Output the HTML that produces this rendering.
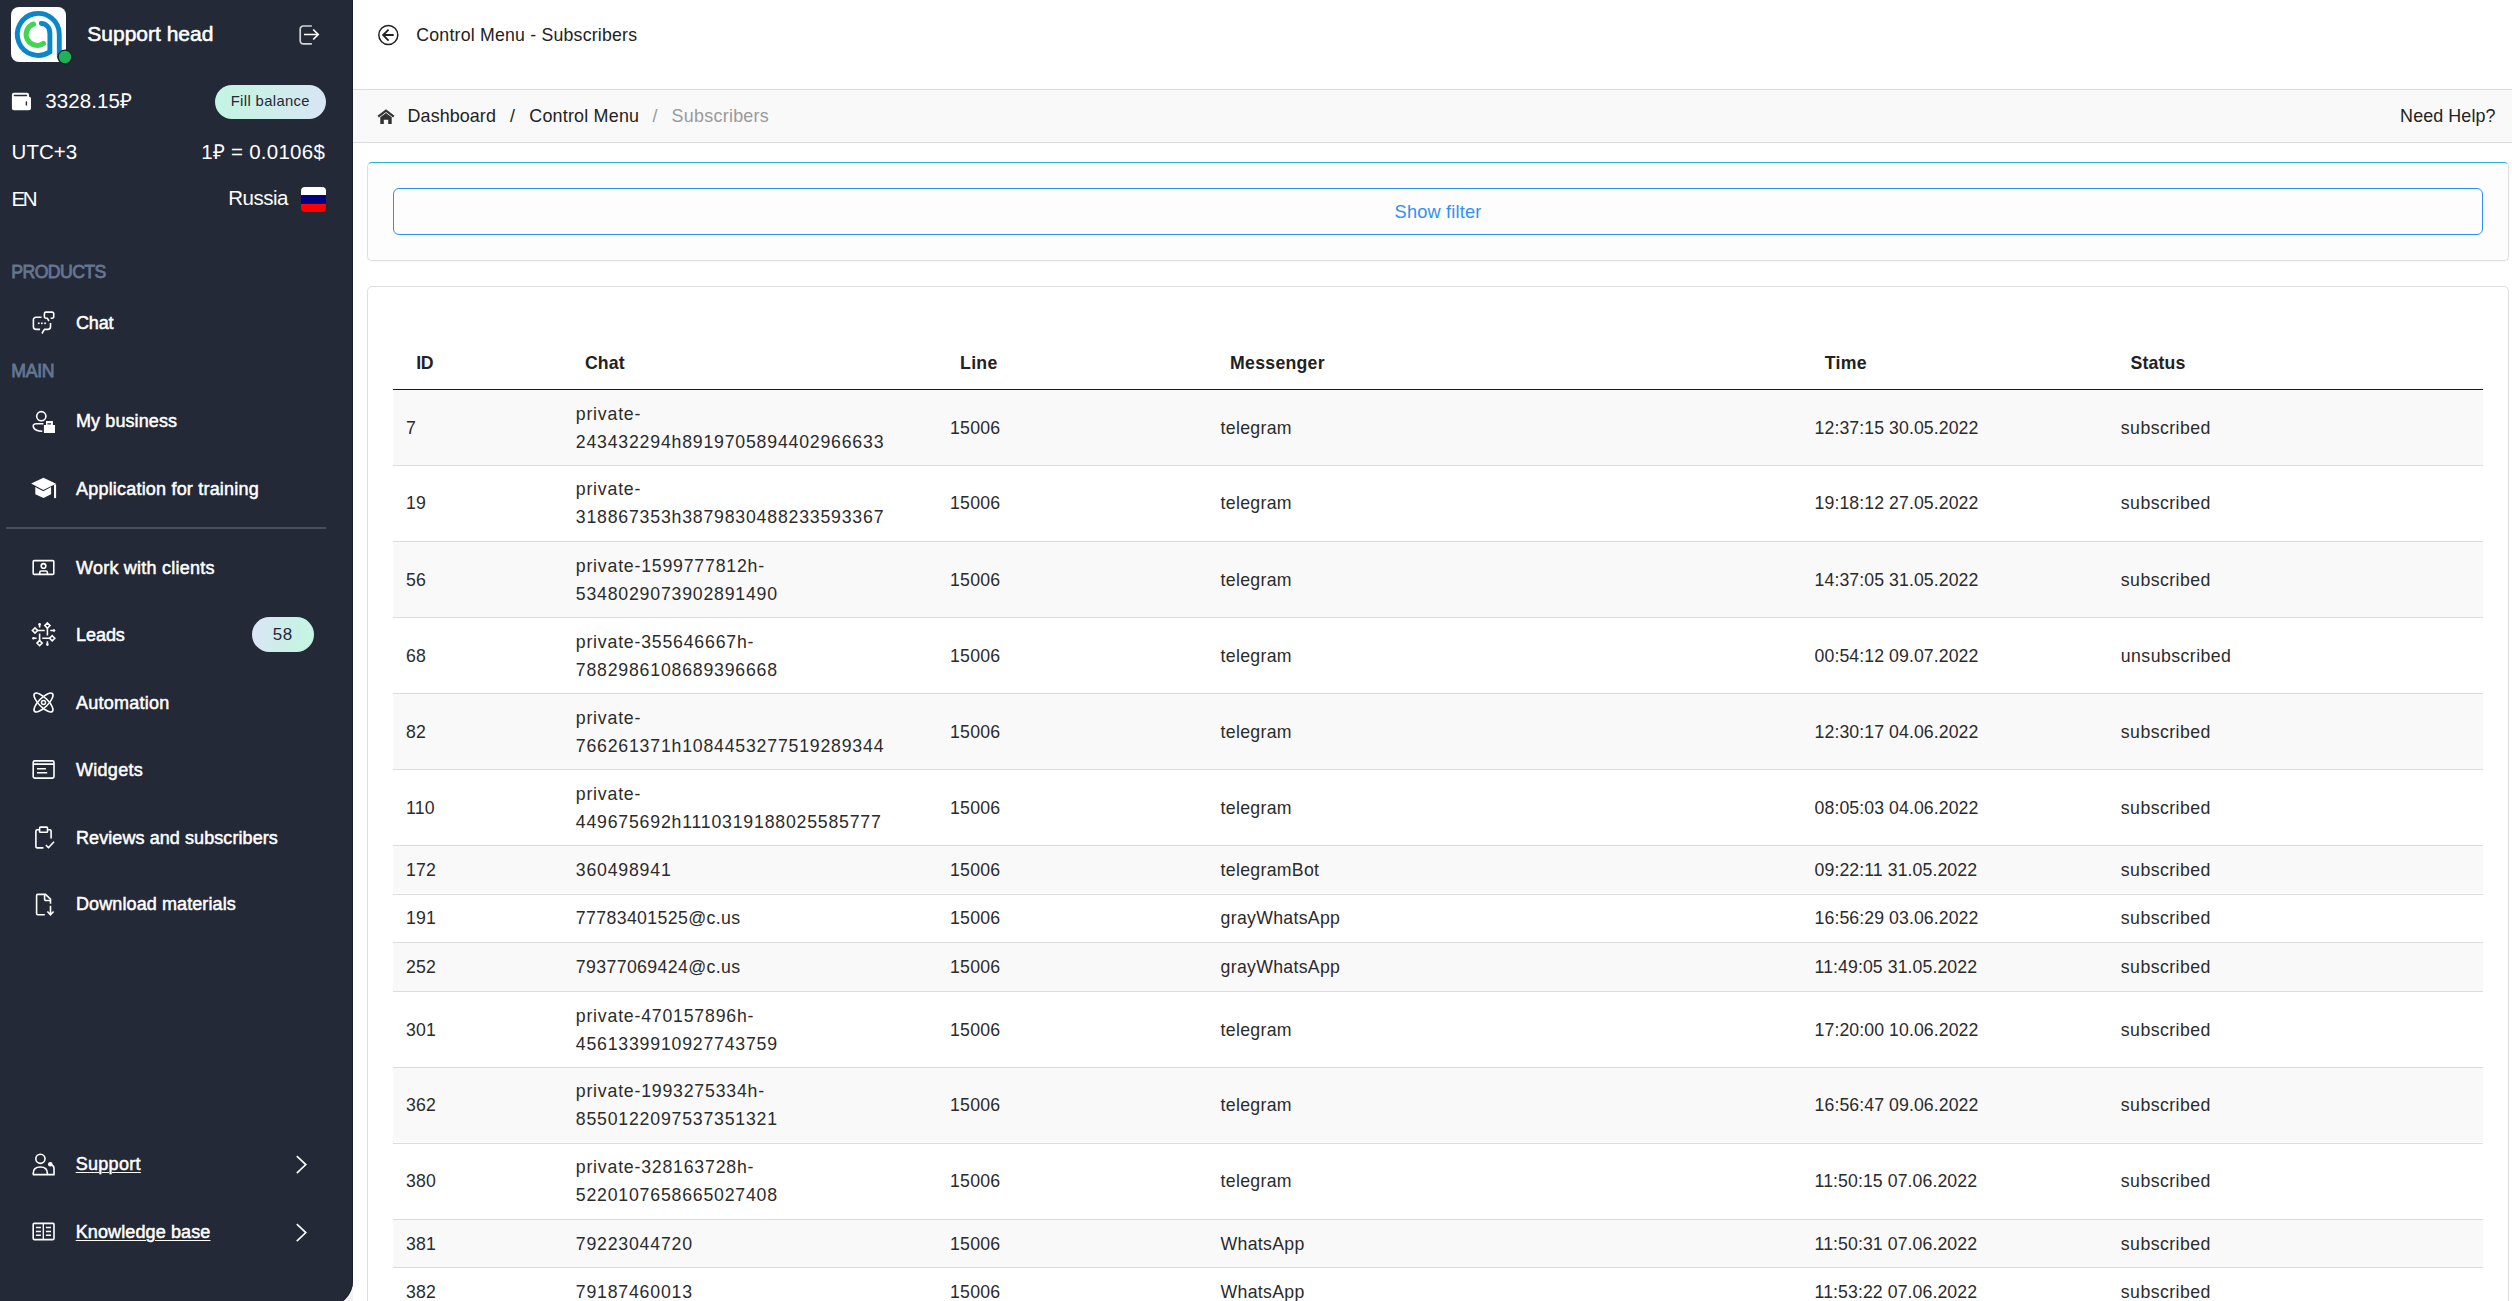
<!DOCTYPE html>
<html><head><meta charset="utf-8"><title>Control Menu - Subscribers</title>
<style>
html,body{margin:0;padding:0}
body{width:2512px;height:1301px;overflow:hidden;position:relative;background:#f2f2f2;font-family:"Liberation Sans",sans-serif}
.t{position:absolute;white-space:nowrap}
#sb{position:absolute;left:0;top:0;width:353px;height:1306px;background:#232936;border-bottom-right-radius:25px;box-shadow:inset -1px 0 0 #1b202b}
</style></head><body>
<div id="sb"></div>
<svg style="position:absolute;left:11px;top:7px" width="62" height="62" viewBox="0 0 62 62">
<rect x="0" y="0" width="55" height="55" rx="8" fill="#fff"/>
<path d="M30.3 16.5 C35.3 16.8 38.9 20.8 38.9 26.5 V44.9 A21 21 0 1 1 48.3 27.5 V50" fill="none" stroke="#0a87cc" stroke-width="4.9" stroke-linecap="round"/>
<path d="M22.6 17 A11 11 0 1 0 32.55 36.36" fill="none" stroke="#42d554" stroke-width="5.1" stroke-linecap="round"/>
<circle cx="54" cy="50" r="7.6" fill="#1c2130"/>
<circle cx="54" cy="50" r="6.2" fill="#1fb357"/>
</svg>
<div class="t" style="left:87.30px;top:23.42px;font-size:21px;line-height:21px;color:#fff;font-weight:400;letter-spacing:0px;-webkit-text-stroke:0.55px #fff;">Support head</div>
<svg style="position:absolute;left:296px;top:22px" width="26" height="26" viewBox="0 0 26 26">
<path d="M15.9 4 H7.5 A3 3 0 0 0 4.2 7 V18.8 A3 3 0 0 0 7.5 21.8 H15.9" fill="none" stroke="#d2d3d6" stroke-width="1.7"/>
<path d="M8 12.5 H22 M17.2 7.5 L22.2 12.5 L17.2 17.5" fill="none" stroke="#fff" stroke-width="1.7"/>
</svg>
<svg style="position:absolute;left:8px;top:88px" width="28" height="28" viewBox="0 0 28 28">
<path d="M5.9 4.7 H19 A2 2 0 0 1 21 6.7 V8.7 H21.1 A1.9 1.9 0 0 1 23 10.6 V20.2 A2 2 0 0 1 21 22.2 H5.9 A2 2 0 0 1 3.9 20.2 V6.7 A2 2 0 0 1 5.9 4.7 Z" fill="#fff"/>
<path d="M6.4 7.5 H18.5" stroke="#232936" stroke-width="1.3" stroke-linecap="round"/>
<path d="M18.4 13.9 V16.9" stroke="#232936" stroke-width="1.4" stroke-linecap="round"/>
</svg>
<div class="t" style="left:45.20px;top:91.15px;font-size:20.5px;line-height:20.5px;color:#fff;font-weight:400;letter-spacing:0.1px;">3328.15₽</div>
<div style="position:absolute;left:215px;top:85px;width:111px;height:34px;border-radius:17px;background:linear-gradient(100deg,#c3f5e2 0%,#cdeee9 50%,#d9e5f7 100%)"></div>
<div class="t" style="left:230.70px;top:94.17px;font-size:14.8px;line-height:14.8px;color:#232936;font-weight:400;letter-spacing:0.37px;">Fill balance</div>
<div class="t" style="left:11.60px;top:141.75px;font-size:20.5px;line-height:20.5px;color:#fff;font-weight:400;letter-spacing:0px;">UTC+3</div>
<div class="t" style="right:2186.95px;top:141.75px;font-size:20.5px;line-height:20.5px;color:#fff;font-weight:400;letter-spacing:0.25px;">1₽ = 0.0106$</div>
<div class="t" style="left:11.60px;top:188.65px;font-size:20.5px;line-height:20.5px;color:#fff;font-weight:400;letter-spacing:-2.4px;">EN</div>
<div class="t" style="right:2223.99px;top:188.35px;font-size:20.5px;line-height:20.5px;color:#fff;font-weight:400;letter-spacing:-0.49px;">Russia</div>
<div style="position:absolute;left:301px;top:187px;width:25px;height:25px;border-radius:4px;overflow:hidden">
<div style="height:8.3px;background:#fff"></div><div style="height:8.4px;background:#000080"></div><div style="height:8.3px;background:#ff0000"></div></div>
<div class="t" style="left:11.30px;top:264.02px;font-size:17.7px;line-height:17.7px;color:#64768f;font-weight:400;letter-spacing:-0.6px;-webkit-text-stroke:0.8px #64768f;">PRODUCTS</div>
<div class="t" style="left:11.30px;top:363.12px;font-size:17.7px;line-height:17.7px;color:#64768f;font-weight:400;letter-spacing:-0.3px;-webkit-text-stroke:0.8px #64768f;">MAIN</div>
<div class="t" style="left:76.00px;top:313.86px;font-size:18px;line-height:18px;color:#fff;font-weight:400;letter-spacing:-0.15px;-webkit-text-stroke:0.5px #fff;">Chat</div>
<div class="t" style="left:76.00px;top:411.96px;font-size:18px;line-height:18px;color:#fff;font-weight:400;letter-spacing:0.1px;-webkit-text-stroke:0.5px #fff;">My business</div>
<div class="t" style="left:76.00px;top:479.86px;font-size:18px;line-height:18px;color:#fff;font-weight:400;letter-spacing:0.2px;-webkit-text-stroke:0.5px #fff;">Application for training</div>
<div class="t" style="left:76.00px;top:558.96px;font-size:18px;line-height:18px;color:#fff;font-weight:400;letter-spacing:0.24px;-webkit-text-stroke:0.5px #fff;">Work with clients</div>
<div class="t" style="left:76.00px;top:625.86px;font-size:18px;line-height:18px;color:#fff;font-weight:400;letter-spacing:-0.05px;-webkit-text-stroke:0.5px #fff;">Leads</div>
<div class="t" style="left:76.00px;top:693.66px;font-size:18px;line-height:18px;color:#fff;font-weight:400;letter-spacing:0.25px;-webkit-text-stroke:0.5px #fff;">Automation</div>
<div class="t" style="left:76.00px;top:760.56px;font-size:18px;line-height:18px;color:#fff;font-weight:400;letter-spacing:0.28px;-webkit-text-stroke:0.5px #fff;">Widgets</div>
<div class="t" style="left:76.00px;top:828.76px;font-size:18px;line-height:18px;color:#fff;font-weight:400;letter-spacing:0.08px;-webkit-text-stroke:0.5px #fff;">Reviews and subscribers</div>
<div class="t" style="left:76.00px;top:895.36px;font-size:18px;line-height:18px;color:#fff;font-weight:400;letter-spacing:0.1px;-webkit-text-stroke:0.5px #fff;">Download materials</div>
<div style="position:absolute;left:6px;top:527px;width:320px;height:2px;background:#4a4f5b"></div>
<div style="position:absolute;left:252px;top:617px;width:62px;height:35px;border-radius:17.5px;background:linear-gradient(100deg,#dbe5f8 0%,#cdeee9 50%,#c3f7e2 100%)"></div>
<div class="t" style="left:272.80px;top:626.31px;font-size:17px;line-height:17px;color:#232936;font-weight:400;letter-spacing:0.55px;">58</div>
<div class="t" style="left:75.70px;top:1154.86px;font-size:18px;line-height:18px;color:#fff;font-weight:400;letter-spacing:0.3px;-webkit-text-stroke:0.5px #fff;text-decoration:underline;text-underline-offset:2px;text-decoration-thickness:1px;">Support</div>
<div class="t" style="left:75.70px;top:1222.96px;font-size:18px;line-height:18px;color:#fff;font-weight:400;letter-spacing:0.12px;-webkit-text-stroke:0.5px #fff;text-decoration:underline;text-underline-offset:2px;text-decoration-thickness:1px;">Knowledge base</div>
<svg style="position:absolute;left:294px;top:1155px" width="15" height="20" viewBox="0 0 15 20">
<path d="M2.8 1.2 L11.8 9.6 L2.8 18.2" fill="none" stroke="#fff" stroke-width="1.6"/></svg>
<svg style="position:absolute;left:294px;top:1222.5px" width="15" height="20" viewBox="0 0 15 20">
<path d="M2.8 1.2 L11.8 9.6 L2.8 18.2" fill="none" stroke="#fff" stroke-width="1.6"/></svg>
<svg style="position:absolute;left:28px;top:305px" width="32" height="35" viewBox="0 0 32 35" fill="none" stroke="#fff" stroke-width="1.6">
<path d="M13.5 12.2 H8 A2.6 2.6 0 0 0 5.4 14.8 V21.8 A2.6 2.6 0 0 0 8 24.4 H12.1"/>
<path d="M16.1 24.4 H19.9 A2.6 2.6 0 0 0 22.5 21.8 V18.1"/>
<path d="M16.3 24.3 L14 28.5"/>
<path d="M22.6 13.2 H24.2 A1.5 1.5 0 0 0 25.7 11.7 V8.6 A1.5 1.5 0 0 0 24.2 7.1 H17.9 A1.5 1.5 0 0 0 16.4 8.6 V11.7 A1.5 1.5 0 0 0 17.9 13.2 H19.3 L20.9 16"/>
<g fill="#fff" stroke="none"><rect x="9.9" y="17.5" width="1.7" height="1.6"/><rect x="13" y="17.5" width="1.7" height="1.6"/><rect x="16.2" y="17.5" width="1.7" height="1.6"/></g>
</svg>
<svg style="position:absolute;left:28px;top:405px" width="32" height="35" viewBox="0 0 32 35" fill="none" stroke="#fff" stroke-width="1.6">
<circle cx="13.3" cy="11.2" r="4.6"/>
<path d="M15.4 18.8 H8 C5.5 18.8 4.6 20.6 5.6 22.6 C6.6 24.8 9.5 26.2 14.3 26.2"/>
<g fill="#fff" stroke="none">
<path d="M18 16.1 H24.9 V20 H27 V27.9 H15.9 V20 H18 Z M19.4 18.2 V19.5 H23 V18.2 Z" fill-rule="evenodd"/>
</g>
</svg>
<svg style="position:absolute;left:28px;top:470px" width="32" height="35" viewBox="0 0 32 35" fill="none" stroke="#fff" stroke-width="1.6">
<g fill="#fff" stroke="none">
<path d="M3.2 13.5 L15.5 7.7 L28 13.7 L15.3 20.1 Z"/>
<path d="M7.3 17 L15.3 21.2 L23.1 17 V24.2 L15.5 28 L7.3 24.2 Z"/>
<rect x="26" y="14.4" width="2.1" height="13.7"/>
</g>
</svg>
<svg style="position:absolute;left:28px;top:550px" width="32" height="35" viewBox="0 0 32 35" fill="none" stroke="#fff" stroke-width="1.6">
<rect x="5.2" y="10.6" width="20.6" height="13.8" rx="1"/>
<circle cx="15.5" cy="15.9" r="2.3"/>
<path d="M11.7 24.4 V22.6 A1.6 1.6 0 0 1 13.3 21 H17.8 A1.6 1.6 0 0 1 19.4 22.6 V24.4"/>
</svg>
<svg style="position:absolute;left:28px;top:617px" width="32" height="35" viewBox="0 0 32 35" fill="none" stroke="#fff" stroke-width="1.6">
<path d="M9.4 13.5 H16.7 M19.4 11 V18.6 M14.3 21.3 H21.8 M11.6 16.4 V23.7 M11.6 7.4 V10.5 M22.3 13.5 H25.8 M5.9 21.3 H8.6 M19.4 24.2 V27.4"/>
<path d="M7 10.9 L9.6 13.5 L7 16.1 L4.4 13.5 Z M19.4 6 L22 8.6 L19.4 11.2 L16.8 8.6 Z M24.2 18.7 L26.8 21.3 L24.2 23.9 L21.6 21.3 Z M11.6 23.5 L14.2 26.1 L11.6 28.7 L9 26.1 Z"/>
<g fill="#fff" stroke="none"><circle cx="11.6" cy="7.2" r="1.3"/><circle cx="26" cy="13.5" r="1.3"/><circle cx="5.5" cy="21.3" r="1.3"/><circle cx="19.4" cy="27.6" r="1.3"/></g>
</svg>
<svg style="position:absolute;left:28px;top:685px" width="32" height="35" viewBox="0 0 32 35" fill="none" stroke="#fff" stroke-width="1.6">
<ellipse cx="15.5" cy="17.5" rx="12.6" ry="4.6" transform="rotate(45 15.5 17.5)"/>
<ellipse cx="15.5" cy="17.5" rx="12.6" ry="4.6" transform="rotate(-45 15.5 17.5)"/>
<circle cx="15.5" cy="17.5" r="2" stroke-width="1.5"/>
</svg>
<svg style="position:absolute;left:28px;top:752px" width="32" height="35" viewBox="0 0 32 35" fill="none" stroke="#fff" stroke-width="1.6">
<rect x="5.2" y="8.9" width="20.8" height="17.2" rx="1.5"/>
<path d="M5.2 12.1 H26 M9 16.7 H17.9 M9 20.7 H19.2"/>
</svg>
<svg style="position:absolute;left:28px;top:820px" width="32" height="35" viewBox="0 0 32 35" fill="none" stroke="#fff" stroke-width="1.6">
<path d="M11 9.7 H9.1 A1.2 1.2 0 0 0 7.9 10.9 V26.7 A1.2 1.2 0 0 0 9.1 27.9 H15.5"/>
<path d="M20.2 9.7 H21.9 A1.2 1.2 0 0 1 23.1 10.9 V18.6"/>
<rect x="11.6" y="7.1" width="7.9" height="5.1" rx="0.8"/>
<path d="M17.8 25.2 L20.5 27.7 L26 21.7"/>
</svg>
<svg style="position:absolute;left:28px;top:887px" width="32" height="35" viewBox="0 0 32 35" fill="none" stroke="#fff" stroke-width="1.6">
<path d="M16.8 27.7 H9.8 A1.2 1.2 0 0 1 8.6 26.5 V8.6 A1.2 1.2 0 0 1 9.8 7.4 H17.5 L22.5 12.2 V16.7"/>
<path d="M16.6 7.6 V12.3 A1.2 1.2 0 0 0 17.8 13.5 H22.5"/>
<path d="M22.5 18.8 V28 M19.4 24.5 L22.5 27.8 L25.6 24.5"/>
</svg>
<svg style="position:absolute;left:28px;top:1148px" width="32" height="35" viewBox="0 0 32 35" fill="none" stroke="#fff" stroke-width="1.6">
<circle cx="12.4" cy="10.8" r="4.6"/>
<path d="M5.2 26.6 V25.5 C5.2 21.5 8 19 12.4 19 C16.8 19 19.4 21.5 19.4 25.5 V26.6"/>
<path d="M4.8 26.6 H26 V20.2 C26 18.6 24.6 17.2 22.6 16.6"/>
<circle cx="22.3" cy="16.2" r="2.3" fill="#fff" stroke="none"/>
</svg>
<svg style="position:absolute;left:28px;top:1214px" width="32" height="35" viewBox="0 0 32 35" fill="none" stroke="#fff" stroke-width="1.6">
<rect x="5.2" y="9.4" width="20.8" height="16.2" rx="1"/>
<path d="M15.3 9.4 V25.6" stroke-width="1.3"/>
<path d="M7.9 13.6 H12.9 M7.9 17.5 H12.9 M7.9 21.3 H12.9 M17.9 13.6 H23 M17.9 17.5 H23 M17.9 21.3 H23" stroke-width="1.5"/>
</svg>
<div style="position:absolute;left:353px;top:0;width:2159px;height:1301px;background:#fff"></div>
<div style="position:absolute;left:353px;top:89px;width:2159px;height:53px;background:#f9f9f9;border-top:1px solid #dcdcdc;border-bottom:1px solid #dcdcdc;box-sizing:border-box;height:54px"></div>
<svg style="position:absolute;left:376px;top:23px" width="24" height="24" viewBox="0 0 24 24">
<circle cx="12.3" cy="12" r="9.5" fill="none" stroke="#222" stroke-width="1.5"/>
<path d="M17.7 12 H7.2 M12.6 6.6 L7.1 12 L12.6 17.7" fill="none" stroke="#222" stroke-width="1.8"/></svg>
<div class="t" style="left:416.30px;top:26.72px;font-size:17.7px;line-height:17.7px;color:#222;font-weight:400;letter-spacing:0.22px;">Control Menu - Subscribers</div>
<svg style="position:absolute;left:377px;top:109px" width="18" height="16" viewBox="0 0 18 16">
<path d="M1.2 7.6 L9 1.6 L16.8 7.6" fill="none" stroke="#333" stroke-width="2.2"/>
<path d="M3.3 8.2 L9 4 L14.7 8.2 V15 H11.2 V10.8 H6.8 V15 H3.3 Z" fill="#333"/></svg>
<div class="t" style="left:407.60px;top:107.55px;font-size:17.9px;line-height:17.9px;color:#222;font-weight:400;letter-spacing:0.09px;">Dashboard</div>
<div class="t" style="left:510.00px;top:107.55px;font-size:17.9px;line-height:17.9px;color:#222;font-weight:400;letter-spacing:0px;">/</div>
<div class="t" style="left:529.30px;top:107.55px;font-size:17.9px;line-height:17.9px;color:#222;font-weight:400;letter-spacing:0.21px;">Control Menu</div>
<div class="t" style="left:652.60px;top:107.55px;font-size:17.9px;line-height:17.9px;color:#999;font-weight:400;letter-spacing:0px;">/</div>
<div class="t" style="left:671.60px;top:107.55px;font-size:17.9px;line-height:17.9px;color:#999;font-weight:400;letter-spacing:0.27px;">Subscribers</div>
<div class="t" style="right:16.40px;top:107.85px;font-size:17.9px;line-height:17.9px;color:#222;font-weight:400;letter-spacing:0.1px;">Need Help?</div>
<div style="position:absolute;left:367px;top:162px;width:2142px;height:99px;box-sizing:border-box;border:1px solid #dedede;border-top:1.5px solid #2bb5cc;border-radius:5px;background:#fdfdfd;box-shadow:0 1px 2px rgba(0,0,0,.04)"></div>
<div style="position:absolute;left:393px;top:188px;width:2090px;height:47px;box-sizing:border-box;border:1.6px solid #2d8ff6;border-radius:6px;background:#fdfdfd"></div>
<div class="t" style="left:1394.60px;top:203.19px;font-size:18.2px;line-height:18.2px;color:#3090f4;font-weight:400;letter-spacing:0.18px;">Show filter</div>
<div style="position:absolute;left:367px;top:286px;width:2142px;height:1100px;box-sizing:border-box;border:1px solid #dedede;border-radius:5px;background:#fff"></div>
<div class="t" style="left:416.20px;top:354.62px;font-size:17.7px;line-height:17.7px;color:#222;font-weight:700;letter-spacing:-0.3px;">ID</div>
<div class="t" style="left:585.00px;top:354.62px;font-size:17.7px;line-height:17.7px;color:#222;font-weight:700;letter-spacing:0.1px;">Chat</div>
<div class="t" style="left:960.10px;top:354.62px;font-size:17.7px;line-height:17.7px;color:#222;font-weight:700;letter-spacing:0.28px;">Line</div>
<div class="t" style="left:1230.10px;top:354.62px;font-size:17.7px;line-height:17.7px;color:#222;font-weight:700;letter-spacing:0.26px;">Messenger</div>
<div class="t" style="left:1824.70px;top:354.62px;font-size:17.7px;line-height:17.7px;color:#222;font-weight:700;letter-spacing:0.28px;">Time</div>
<div class="t" style="left:2130.50px;top:354.62px;font-size:17.7px;line-height:17.7px;color:#222;font-weight:700;letter-spacing:0.15px;">Status</div>
<div style="position:absolute;left:393px;top:388.8px;width:2090px;height:1.4px;background:#181818"></div>
<div style="position:absolute;left:393px;top:390.00px;width:2090px;height:74.50px;background:#f9f9f9"></div>
<div class="t" style="left:406.00px;top:419.62px;font-size:17.7px;line-height:17.7px;color:#2b2b2b;font-weight:400;letter-spacing:0.2px;">7</div>
<div class="t" style="left:575.80px;top:405.62px;font-size:17.7px;line-height:17.7px;color:#2b2b2b;font-weight:400;letter-spacing:0.8px;">private-</div>
<div class="t" style="left:575.80px;top:433.62px;font-size:17.7px;line-height:17.7px;color:#2b2b2b;font-weight:400;letter-spacing:0.8px;">243432294h8919705894402966633</div>
<div class="t" style="left:950.10px;top:419.62px;font-size:17.7px;line-height:17.7px;color:#2b2b2b;font-weight:400;letter-spacing:0.18px;">15006</div>
<div class="t" style="left:1220.60px;top:419.62px;font-size:17.7px;line-height:17.7px;color:#2b2b2b;font-weight:400;letter-spacing:0.3px;">telegram</div>
<div class="t" style="left:1814.60px;top:419.62px;font-size:17.7px;line-height:17.7px;color:#2b2b2b;font-weight:400;letter-spacing:0.08px;">12:37:15 30.05.2022</div>
<div class="t" style="left:2120.80px;top:419.62px;font-size:17.7px;line-height:17.7px;color:#2b2b2b;font-weight:400;letter-spacing:0.45px;">subscribed</div>
<div style="position:absolute;left:393px;top:464.50px;width:2090px;height:1.2px;background:#dcdcdc"></div>
<div class="t" style="left:406.00px;top:495.32px;font-size:17.7px;line-height:17.7px;color:#2b2b2b;font-weight:400;letter-spacing:0.2px;">19</div>
<div class="t" style="left:575.80px;top:481.32px;font-size:17.7px;line-height:17.7px;color:#2b2b2b;font-weight:400;letter-spacing:0.8px;">private-</div>
<div class="t" style="left:575.80px;top:509.32px;font-size:17.7px;line-height:17.7px;color:#2b2b2b;font-weight:400;letter-spacing:0.8px;">318867353h3879830488233593367</div>
<div class="t" style="left:950.10px;top:495.32px;font-size:17.7px;line-height:17.7px;color:#2b2b2b;font-weight:400;letter-spacing:0.18px;">15006</div>
<div class="t" style="left:1220.60px;top:495.32px;font-size:17.7px;line-height:17.7px;color:#2b2b2b;font-weight:400;letter-spacing:0.3px;">telegram</div>
<div class="t" style="left:1814.60px;top:495.32px;font-size:17.7px;line-height:17.7px;color:#2b2b2b;font-weight:400;letter-spacing:0.08px;">19:18:12 27.05.2022</div>
<div class="t" style="left:2120.80px;top:495.32px;font-size:17.7px;line-height:17.7px;color:#2b2b2b;font-weight:400;letter-spacing:0.45px;">subscribed</div>
<div style="position:absolute;left:393px;top:540.90px;width:2090px;height:1.2px;background:#dcdcdc"></div>
<div style="position:absolute;left:393px;top:542.10px;width:2090px;height:74.90px;background:#f9f9f9"></div>
<div class="t" style="left:406.00px;top:571.72px;font-size:17.7px;line-height:17.7px;color:#2b2b2b;font-weight:400;letter-spacing:0.2px;">56</div>
<div class="t" style="left:575.80px;top:557.72px;font-size:17.7px;line-height:17.7px;color:#2b2b2b;font-weight:400;letter-spacing:0.8px;">private-1599777812h-</div>
<div class="t" style="left:575.80px;top:585.72px;font-size:17.7px;line-height:17.7px;color:#2b2b2b;font-weight:400;letter-spacing:0.8px;">5348029073902891490</div>
<div class="t" style="left:950.10px;top:571.72px;font-size:17.7px;line-height:17.7px;color:#2b2b2b;font-weight:400;letter-spacing:0.18px;">15006</div>
<div class="t" style="left:1220.60px;top:571.72px;font-size:17.7px;line-height:17.7px;color:#2b2b2b;font-weight:400;letter-spacing:0.3px;">telegram</div>
<div class="t" style="left:1814.60px;top:571.72px;font-size:17.7px;line-height:17.7px;color:#2b2b2b;font-weight:400;letter-spacing:0.08px;">14:37:05 31.05.2022</div>
<div class="t" style="left:2120.80px;top:571.72px;font-size:17.7px;line-height:17.7px;color:#2b2b2b;font-weight:400;letter-spacing:0.45px;">subscribed</div>
<div style="position:absolute;left:393px;top:617.00px;width:2090px;height:1.2px;background:#dcdcdc"></div>
<div class="t" style="left:406.00px;top:647.82px;font-size:17.7px;line-height:17.7px;color:#2b2b2b;font-weight:400;letter-spacing:0.2px;">68</div>
<div class="t" style="left:575.80px;top:633.82px;font-size:17.7px;line-height:17.7px;color:#2b2b2b;font-weight:400;letter-spacing:0.8px;">private-355646667h-</div>
<div class="t" style="left:575.80px;top:661.82px;font-size:17.7px;line-height:17.7px;color:#2b2b2b;font-weight:400;letter-spacing:0.8px;">7882986108689396668</div>
<div class="t" style="left:950.10px;top:647.82px;font-size:17.7px;line-height:17.7px;color:#2b2b2b;font-weight:400;letter-spacing:0.18px;">15006</div>
<div class="t" style="left:1220.60px;top:647.82px;font-size:17.7px;line-height:17.7px;color:#2b2b2b;font-weight:400;letter-spacing:0.3px;">telegram</div>
<div class="t" style="left:1814.60px;top:647.82px;font-size:17.7px;line-height:17.7px;color:#2b2b2b;font-weight:400;letter-spacing:0.08px;">00:54:12 09.07.2022</div>
<div class="t" style="left:2120.80px;top:647.82px;font-size:17.7px;line-height:17.7px;color:#2b2b2b;font-weight:400;letter-spacing:0.45px;">unsubscribed</div>
<div style="position:absolute;left:393px;top:692.80px;width:2090px;height:1.2px;background:#dcdcdc"></div>
<div style="position:absolute;left:393px;top:694.00px;width:2090px;height:74.90px;background:#f9f9f9"></div>
<div class="t" style="left:406.00px;top:723.62px;font-size:17.7px;line-height:17.7px;color:#2b2b2b;font-weight:400;letter-spacing:0.2px;">82</div>
<div class="t" style="left:575.80px;top:709.62px;font-size:17.7px;line-height:17.7px;color:#2b2b2b;font-weight:400;letter-spacing:0.8px;">private-</div>
<div class="t" style="left:575.80px;top:737.62px;font-size:17.7px;line-height:17.7px;color:#2b2b2b;font-weight:400;letter-spacing:0.8px;">766261371h1084453277519289344</div>
<div class="t" style="left:950.10px;top:723.62px;font-size:17.7px;line-height:17.7px;color:#2b2b2b;font-weight:400;letter-spacing:0.18px;">15006</div>
<div class="t" style="left:1220.60px;top:723.62px;font-size:17.7px;line-height:17.7px;color:#2b2b2b;font-weight:400;letter-spacing:0.3px;">telegram</div>
<div class="t" style="left:1814.60px;top:723.62px;font-size:17.7px;line-height:17.7px;color:#2b2b2b;font-weight:400;letter-spacing:0.08px;">12:30:17 04.06.2022</div>
<div class="t" style="left:2120.80px;top:723.62px;font-size:17.7px;line-height:17.7px;color:#2b2b2b;font-weight:400;letter-spacing:0.45px;">subscribed</div>
<div style="position:absolute;left:393px;top:768.90px;width:2090px;height:1.2px;background:#dcdcdc"></div>
<div class="t" style="left:406.00px;top:799.72px;font-size:17.7px;line-height:17.7px;color:#2b2b2b;font-weight:400;letter-spacing:0.2px;">110</div>
<div class="t" style="left:575.80px;top:785.72px;font-size:17.7px;line-height:17.7px;color:#2b2b2b;font-weight:400;letter-spacing:0.8px;">private-</div>
<div class="t" style="left:575.80px;top:813.72px;font-size:17.7px;line-height:17.7px;color:#2b2b2b;font-weight:400;letter-spacing:0.8px;">449675692h1110319188025585777</div>
<div class="t" style="left:950.10px;top:799.72px;font-size:17.7px;line-height:17.7px;color:#2b2b2b;font-weight:400;letter-spacing:0.18px;">15006</div>
<div class="t" style="left:1220.60px;top:799.72px;font-size:17.7px;line-height:17.7px;color:#2b2b2b;font-weight:400;letter-spacing:0.3px;">telegram</div>
<div class="t" style="left:1814.60px;top:799.72px;font-size:17.7px;line-height:17.7px;color:#2b2b2b;font-weight:400;letter-spacing:0.08px;">08:05:03 04.06.2022</div>
<div class="t" style="left:2120.80px;top:799.72px;font-size:17.7px;line-height:17.7px;color:#2b2b2b;font-weight:400;letter-spacing:0.45px;">subscribed</div>
<div style="position:absolute;left:393px;top:844.70px;width:2090px;height:1.2px;background:#dcdcdc"></div>
<div style="position:absolute;left:393px;top:845.90px;width:2090px;height:47.60px;background:#f9f9f9"></div>
<div class="t" style="left:406.00px;top:861.52px;font-size:17.7px;line-height:17.7px;color:#2b2b2b;font-weight:400;letter-spacing:0.2px;">172</div>
<div class="t" style="left:575.80px;top:861.52px;font-size:17.7px;line-height:17.7px;color:#2b2b2b;font-weight:400;letter-spacing:0.8px;">360498941</div>
<div class="t" style="left:950.10px;top:861.52px;font-size:17.7px;line-height:17.7px;color:#2b2b2b;font-weight:400;letter-spacing:0.18px;">15006</div>
<div class="t" style="left:1220.60px;top:861.52px;font-size:17.7px;line-height:17.7px;color:#2b2b2b;font-weight:400;letter-spacing:0.3px;">telegramBot</div>
<div class="t" style="left:1814.60px;top:861.52px;font-size:17.7px;line-height:17.7px;color:#2b2b2b;font-weight:400;letter-spacing:0.08px;">09:22:11 31.05.2022</div>
<div class="t" style="left:2120.80px;top:861.52px;font-size:17.7px;line-height:17.7px;color:#2b2b2b;font-weight:400;letter-spacing:0.45px;">subscribed</div>
<div style="position:absolute;left:393px;top:893.50px;width:2090px;height:1.2px;background:#dcdcdc"></div>
<div class="t" style="left:406.00px;top:910.32px;font-size:17.7px;line-height:17.7px;color:#2b2b2b;font-weight:400;letter-spacing:0.2px;">191</div>
<div class="t" style="left:575.80px;top:910.32px;font-size:17.7px;line-height:17.7px;color:#2b2b2b;font-weight:400;letter-spacing:0.38px;">77783401525@c.us</div>
<div class="t" style="left:950.10px;top:910.32px;font-size:17.7px;line-height:17.7px;color:#2b2b2b;font-weight:400;letter-spacing:0.18px;">15006</div>
<div class="t" style="left:1220.60px;top:910.32px;font-size:17.7px;line-height:17.7px;color:#2b2b2b;font-weight:400;letter-spacing:0.3px;">grayWhatsApp</div>
<div class="t" style="left:1814.60px;top:910.32px;font-size:17.7px;line-height:17.7px;color:#2b2b2b;font-weight:400;letter-spacing:0.08px;">16:56:29 03.06.2022</div>
<div class="t" style="left:2120.80px;top:910.32px;font-size:17.7px;line-height:17.7px;color:#2b2b2b;font-weight:400;letter-spacing:0.45px;">subscribed</div>
<div style="position:absolute;left:393px;top:941.90px;width:2090px;height:1.2px;background:#dcdcdc"></div>
<div style="position:absolute;left:393px;top:943.10px;width:2090px;height:47.70px;background:#f9f9f9"></div>
<div class="t" style="left:406.00px;top:958.72px;font-size:17.7px;line-height:17.7px;color:#2b2b2b;font-weight:400;letter-spacing:0.2px;">252</div>
<div class="t" style="left:575.80px;top:958.72px;font-size:17.7px;line-height:17.7px;color:#2b2b2b;font-weight:400;letter-spacing:0.38px;">79377069424@c.us</div>
<div class="t" style="left:950.10px;top:958.72px;font-size:17.7px;line-height:17.7px;color:#2b2b2b;font-weight:400;letter-spacing:0.18px;">15006</div>
<div class="t" style="left:1220.60px;top:958.72px;font-size:17.7px;line-height:17.7px;color:#2b2b2b;font-weight:400;letter-spacing:0.3px;">grayWhatsApp</div>
<div class="t" style="left:1814.60px;top:958.72px;font-size:17.7px;line-height:17.7px;color:#2b2b2b;font-weight:400;letter-spacing:0.08px;">11:49:05 31.05.2022</div>
<div class="t" style="left:2120.80px;top:958.72px;font-size:17.7px;line-height:17.7px;color:#2b2b2b;font-weight:400;letter-spacing:0.45px;">subscribed</div>
<div style="position:absolute;left:393px;top:990.80px;width:2090px;height:1.2px;background:#dcdcdc"></div>
<div class="t" style="left:406.00px;top:1021.62px;font-size:17.7px;line-height:17.7px;color:#2b2b2b;font-weight:400;letter-spacing:0.2px;">301</div>
<div class="t" style="left:575.80px;top:1007.62px;font-size:17.7px;line-height:17.7px;color:#2b2b2b;font-weight:400;letter-spacing:0.8px;">private-470157896h-</div>
<div class="t" style="left:575.80px;top:1035.62px;font-size:17.7px;line-height:17.7px;color:#2b2b2b;font-weight:400;letter-spacing:0.8px;">4561339910927743759</div>
<div class="t" style="left:950.10px;top:1021.62px;font-size:17.7px;line-height:17.7px;color:#2b2b2b;font-weight:400;letter-spacing:0.18px;">15006</div>
<div class="t" style="left:1220.60px;top:1021.62px;font-size:17.7px;line-height:17.7px;color:#2b2b2b;font-weight:400;letter-spacing:0.3px;">telegram</div>
<div class="t" style="left:1814.60px;top:1021.62px;font-size:17.7px;line-height:17.7px;color:#2b2b2b;font-weight:400;letter-spacing:0.08px;">17:20:00 10.06.2022</div>
<div class="t" style="left:2120.80px;top:1021.62px;font-size:17.7px;line-height:17.7px;color:#2b2b2b;font-weight:400;letter-spacing:0.45px;">subscribed</div>
<div style="position:absolute;left:393px;top:1066.60px;width:2090px;height:1.2px;background:#dcdcdc"></div>
<div style="position:absolute;left:393px;top:1067.80px;width:2090px;height:74.70px;background:#f9f9f9"></div>
<div class="t" style="left:406.00px;top:1097.42px;font-size:17.7px;line-height:17.7px;color:#2b2b2b;font-weight:400;letter-spacing:0.2px;">362</div>
<div class="t" style="left:575.80px;top:1083.42px;font-size:17.7px;line-height:17.7px;color:#2b2b2b;font-weight:400;letter-spacing:0.8px;">private-1993275334h-</div>
<div class="t" style="left:575.80px;top:1111.42px;font-size:17.7px;line-height:17.7px;color:#2b2b2b;font-weight:400;letter-spacing:0.8px;">8550122097537351321</div>
<div class="t" style="left:950.10px;top:1097.42px;font-size:17.7px;line-height:17.7px;color:#2b2b2b;font-weight:400;letter-spacing:0.18px;">15006</div>
<div class="t" style="left:1220.60px;top:1097.42px;font-size:17.7px;line-height:17.7px;color:#2b2b2b;font-weight:400;letter-spacing:0.3px;">telegram</div>
<div class="t" style="left:1814.60px;top:1097.42px;font-size:17.7px;line-height:17.7px;color:#2b2b2b;font-weight:400;letter-spacing:0.08px;">16:56:47 09.06.2022</div>
<div class="t" style="left:2120.80px;top:1097.42px;font-size:17.7px;line-height:17.7px;color:#2b2b2b;font-weight:400;letter-spacing:0.45px;">subscribed</div>
<div style="position:absolute;left:393px;top:1142.50px;width:2090px;height:1.2px;background:#dcdcdc"></div>
<div class="t" style="left:406.00px;top:1173.32px;font-size:17.7px;line-height:17.7px;color:#2b2b2b;font-weight:400;letter-spacing:0.2px;">380</div>
<div class="t" style="left:575.80px;top:1159.32px;font-size:17.7px;line-height:17.7px;color:#2b2b2b;font-weight:400;letter-spacing:0.8px;">private-328163728h-</div>
<div class="t" style="left:575.80px;top:1187.32px;font-size:17.7px;line-height:17.7px;color:#2b2b2b;font-weight:400;letter-spacing:0.8px;">5220107658665027408</div>
<div class="t" style="left:950.10px;top:1173.32px;font-size:17.7px;line-height:17.7px;color:#2b2b2b;font-weight:400;letter-spacing:0.18px;">15006</div>
<div class="t" style="left:1220.60px;top:1173.32px;font-size:17.7px;line-height:17.7px;color:#2b2b2b;font-weight:400;letter-spacing:0.3px;">telegram</div>
<div class="t" style="left:1814.60px;top:1173.32px;font-size:17.7px;line-height:17.7px;color:#2b2b2b;font-weight:400;letter-spacing:0.08px;">11:50:15 07.06.2022</div>
<div class="t" style="left:2120.80px;top:1173.32px;font-size:17.7px;line-height:17.7px;color:#2b2b2b;font-weight:400;letter-spacing:0.45px;">subscribed</div>
<div style="position:absolute;left:393px;top:1218.80px;width:2090px;height:1.2px;background:#dcdcdc"></div>
<div style="position:absolute;left:393px;top:1220.00px;width:2090px;height:46.70px;background:#f9f9f9"></div>
<div class="t" style="left:406.00px;top:1235.62px;font-size:17.7px;line-height:17.7px;color:#2b2b2b;font-weight:400;letter-spacing:0.2px;">381</div>
<div class="t" style="left:575.80px;top:1235.62px;font-size:17.7px;line-height:17.7px;color:#2b2b2b;font-weight:400;letter-spacing:0.8px;">79223044720</div>
<div class="t" style="left:950.10px;top:1235.62px;font-size:17.7px;line-height:17.7px;color:#2b2b2b;font-weight:400;letter-spacing:0.18px;">15006</div>
<div class="t" style="left:1220.60px;top:1235.62px;font-size:17.7px;line-height:17.7px;color:#2b2b2b;font-weight:400;letter-spacing:0.3px;">WhatsApp</div>
<div class="t" style="left:1814.60px;top:1235.62px;font-size:17.7px;line-height:17.7px;color:#2b2b2b;font-weight:400;letter-spacing:0.08px;">11:50:31 07.06.2022</div>
<div class="t" style="left:2120.80px;top:1235.62px;font-size:17.7px;line-height:17.7px;color:#2b2b2b;font-weight:400;letter-spacing:0.45px;">subscribed</div>
<div style="position:absolute;left:393px;top:1266.70px;width:2090px;height:1.2px;background:#dcdcdc"></div>
<div class="t" style="left:406.00px;top:1283.52px;font-size:17.7px;line-height:17.7px;color:#2b2b2b;font-weight:400;letter-spacing:0.2px;">382</div>
<div class="t" style="left:575.80px;top:1283.52px;font-size:17.7px;line-height:17.7px;color:#2b2b2b;font-weight:400;letter-spacing:0.8px;">79187460013</div>
<div class="t" style="left:950.10px;top:1283.52px;font-size:17.7px;line-height:17.7px;color:#2b2b2b;font-weight:400;letter-spacing:0.18px;">15006</div>
<div class="t" style="left:1220.60px;top:1283.52px;font-size:17.7px;line-height:17.7px;color:#2b2b2b;font-weight:400;letter-spacing:0.3px;">WhatsApp</div>
<div class="t" style="left:1814.60px;top:1283.52px;font-size:17.7px;line-height:17.7px;color:#2b2b2b;font-weight:400;letter-spacing:0.08px;">11:53:22 07.06.2022</div>
<div class="t" style="left:2120.80px;top:1283.52px;font-size:17.7px;line-height:17.7px;color:#2b2b2b;font-weight:400;letter-spacing:0.45px;">subscribed</div>
<div style="position:absolute;left:393px;top:1315.20px;width:2090px;height:1.2px;background:#dcdcdc"></div>
</body></html>
